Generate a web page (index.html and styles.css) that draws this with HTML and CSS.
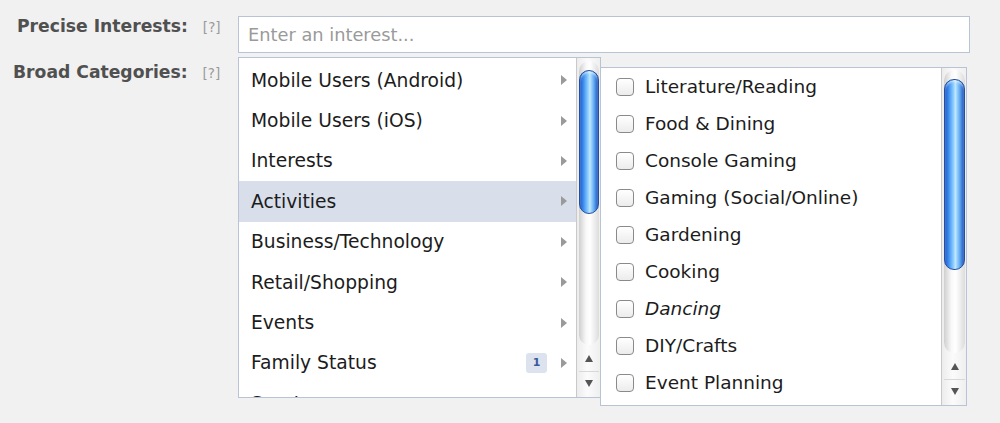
FILE: index.html
```html
<!DOCTYPE html>
<html>
<head>
<meta charset="utf-8">
<link rel="stylesheet" href="styles.css">
</head>
<body>
<div class="form">
  <div class="row row-precise">
    <div class="label">Precise Interests: <span class="help">[?]</span></div>
    <div class="input">Enter an interest...</div>
  </div>
  <div class="row row-broad">
    <div class="label">Broad Categories: <span class="help">[?]</span></div>
    <div class="lists">
      <div class="panel panel-left">
        <ul class="cats">
          <li class="cat"><span class="cat-name">Mobile Users (Android)</span><span class="tri"></span></li>
          <li class="cat"><span class="cat-name">Mobile Users (iOS)</span><span class="tri"></span></li>
          <li class="cat"><span class="cat-name">Interests</span><span class="tri"></span></li>
          <li class="cat cat-active"><span class="cat-name">Activities</span><span class="tri"></span></li>
          <li class="cat"><span class="cat-name">Business/Technology</span><span class="tri"></span></li>
          <li class="cat"><span class="cat-name">Retail/Shopping</span><span class="tri"></span></li>
          <li class="cat"><span class="cat-name">Events</span><span class="tri"></span></li>
          <li class="cat"><span class="cat-name">Family Status</span><span class="badge">1</span><span class="tri"></span></li>
          <li class="cat"><span class="cat-name">Sports</span><span class="tri"></span></li>
        </ul>
        <div class="sb sb-left">
          <div class="sb-track"><div class="sb-thumb"></div></div>
          <div class="sb-arrows"><div class="arr"><span class="up"></span></div><div class="arr"><span class="down"></span></div></div>
        </div>
      </div>
      <div class="panel panel-right">
        <ul class="checks">
          <li class="check"><span class="box"></span>Literature/Reading</li>
          <li class="check"><span class="box"></span>Food &amp; Dining</li>
          <li class="check"><span class="box"></span>Console Gaming</li>
          <li class="check"><span class="box"></span>Gaming (Social/Online)</li>
          <li class="check"><span class="box"></span>Gardening</li>
          <li class="check"><span class="box"></span>Cooking</li>
          <li class="check"><span class="box"></span><em>Dancing</em></li>
          <li class="check"><span class="box"></span>DIY/Crafts</li>
          <li class="check"><span class="box"></span>Event Planning</li>
        </ul>
        <div class="sb sb-right">
          <div class="sb-track"><div class="sb-thumb"></div></div>
          <div class="sb-arrows"><div class="arr"><span class="up"></span></div><div class="arr"><span class="down"></span></div></div>
        </div>
      </div>
    </div>
  </div>
</div>
</body>
</html>
```
FILE: styles.css
```css
html, body {
  margin: 0;
  padding: 0;
}
body {
  background: #f1f1f1;
  font-family: "DejaVu Sans", "Liberation Sans", sans-serif;
  color: #1c1c1c;
  width: 1000px;
  height: 423px;
  overflow: hidden;
}
.form {
  padding-top: 16px;
}
.row {
  display: flex;
  align-items: flex-start;
}
.label {
  width: 238px;
  padding-left: 17px;
  box-sizing: border-box;
  font-weight: bold;
  font-size: 17.2px;
  color: #505050;
  line-height: 20px;
  white-space: nowrap;
  flex: none;
}
.row-broad .label {
  padding-left: 13px;
  padding-top: 5px;
}
.help {
  font-weight: normal;
  font-size: 13.5px;
  color: #9a9a9a;
  margin-left: 9px;
}
.input {
  width: 732px;
  height: 37px;
  box-sizing: border-box;
  border: 1px solid #b8c3d6;
  background: #fff;
  color: #9a9a9a;
  font-size: 17.8px;
  line-height: 35px;
  padding-left: 9px;
}
.row-broad {
  margin-top: 4px;
}
.lists {
  display: flex;
  align-items: flex-start;
}
.panel {
  display: flex;
  background: #fff;
  border: 1px solid #b8c3d6;
  box-sizing: border-box;
  overflow: hidden;
}
.panel-left {
  width: 363px;
  height: 341px;
}
.panel-right {
  width: 367px;
  height: 339px;
  margin-top: 10px;
  margin-left: -1px;
}
ul {
  list-style: none;
  margin: 0;
  padding: 0;
  flex: 1;
  overflow: hidden;
}
.cats {
  padding-top: 2px;
}
.cat {
  height: 40.4px;
  display: flex;
  align-items: center;
  padding: 0 9px 0 12px;
  font-size: 18.7px;
}
.cat-active {
  background: #d8dfea;
}
.cat-name {
  flex: 1;
  white-space: nowrap;
}
.tri {
  width: 0;
  height: 0;
  border-left: 6px solid #9a9a9a;
  border-top: 5px solid transparent;
  border-bottom: 5px solid transparent;
  margin-left: 12px;
}
.badge {
  background: #dce3ee;
  color: #3b5998;
  font-size: 11px;
  font-weight: bold;
  border-radius: 3px;
  width: 21px;
  height: 20px;
  line-height: 20px;
  text-align: center;
  margin-left: 4px;
  margin-right: 2px;
}
.check {
  height: 37px;
  display: flex;
  align-items: center;
  padding-left: 15px;
  font-size: 18.5px;
  white-space: nowrap;
}
.box {
  width: 16px;
  height: 16px;
  border: 1.5px solid #8a8a8a;
  border-radius: 4px;
  background: linear-gradient(#ffffff, #ececec);
  margin-right: 11px;
  flex: none;
}
.check em {
  font-style: italic;
}
.sb {
  flex: none;
  display: flex;
  flex-direction: column;
  border-left: 1px solid #c9c9c9;
  background: linear-gradient(to right, #ececec, #fbfbfb 45%, #efefef);
  box-sizing: border-box;
}
.sb-left {
  width: 24px;
  padding: 3px 1px 0 2px;
}
.sb-right {
  width: 25px;
  padding: 2px 1px 0 2px;
}
.sb-track {
  flex: 1;
  border-radius: 11px;
  background: linear-gradient(to right, #cfcfcf, #f8f8f8 35%, #ffffff 55%, #dcdcdc);
  padding: 9px 0 0;
  box-sizing: border-box;
}
.sb-left .sb-thumb { height: 142px; }
.sb-right .sb-thumb { height: 189px; }
.sb-thumb {
  border-radius: 10px;
  border: 1px solid #244f9e;
  background: linear-gradient(to right, #1d57c7, #3f8ff0 20%, #8fd0ff 45%, #bfe7ff 55%, #5ea9f3 78%, #1c4fb8);
  box-shadow: inset 0 2px 2px rgba(255,255,255,0.5);
}
.sb-arrows {
  height: 52px;
  display: flex;
  flex-direction: column;
  justify-content: center;
}
.arr {
  height: 24px;
  display: flex;
  align-items: center;
  justify-content: center;
}
.arr + .arr {
  border-top: 1px solid #d8d8d8;
}
.up {
  width: 0; height: 0;
  border-bottom: 7px solid #555;
  border-left: 4.5px solid transparent;
  border-right: 4.5px solid transparent;
}
.down {
  width: 0; height: 0;
  border-top: 7px solid #555;
  border-left: 4.5px solid transparent;
  border-right: 4.5px solid transparent;
}
```
